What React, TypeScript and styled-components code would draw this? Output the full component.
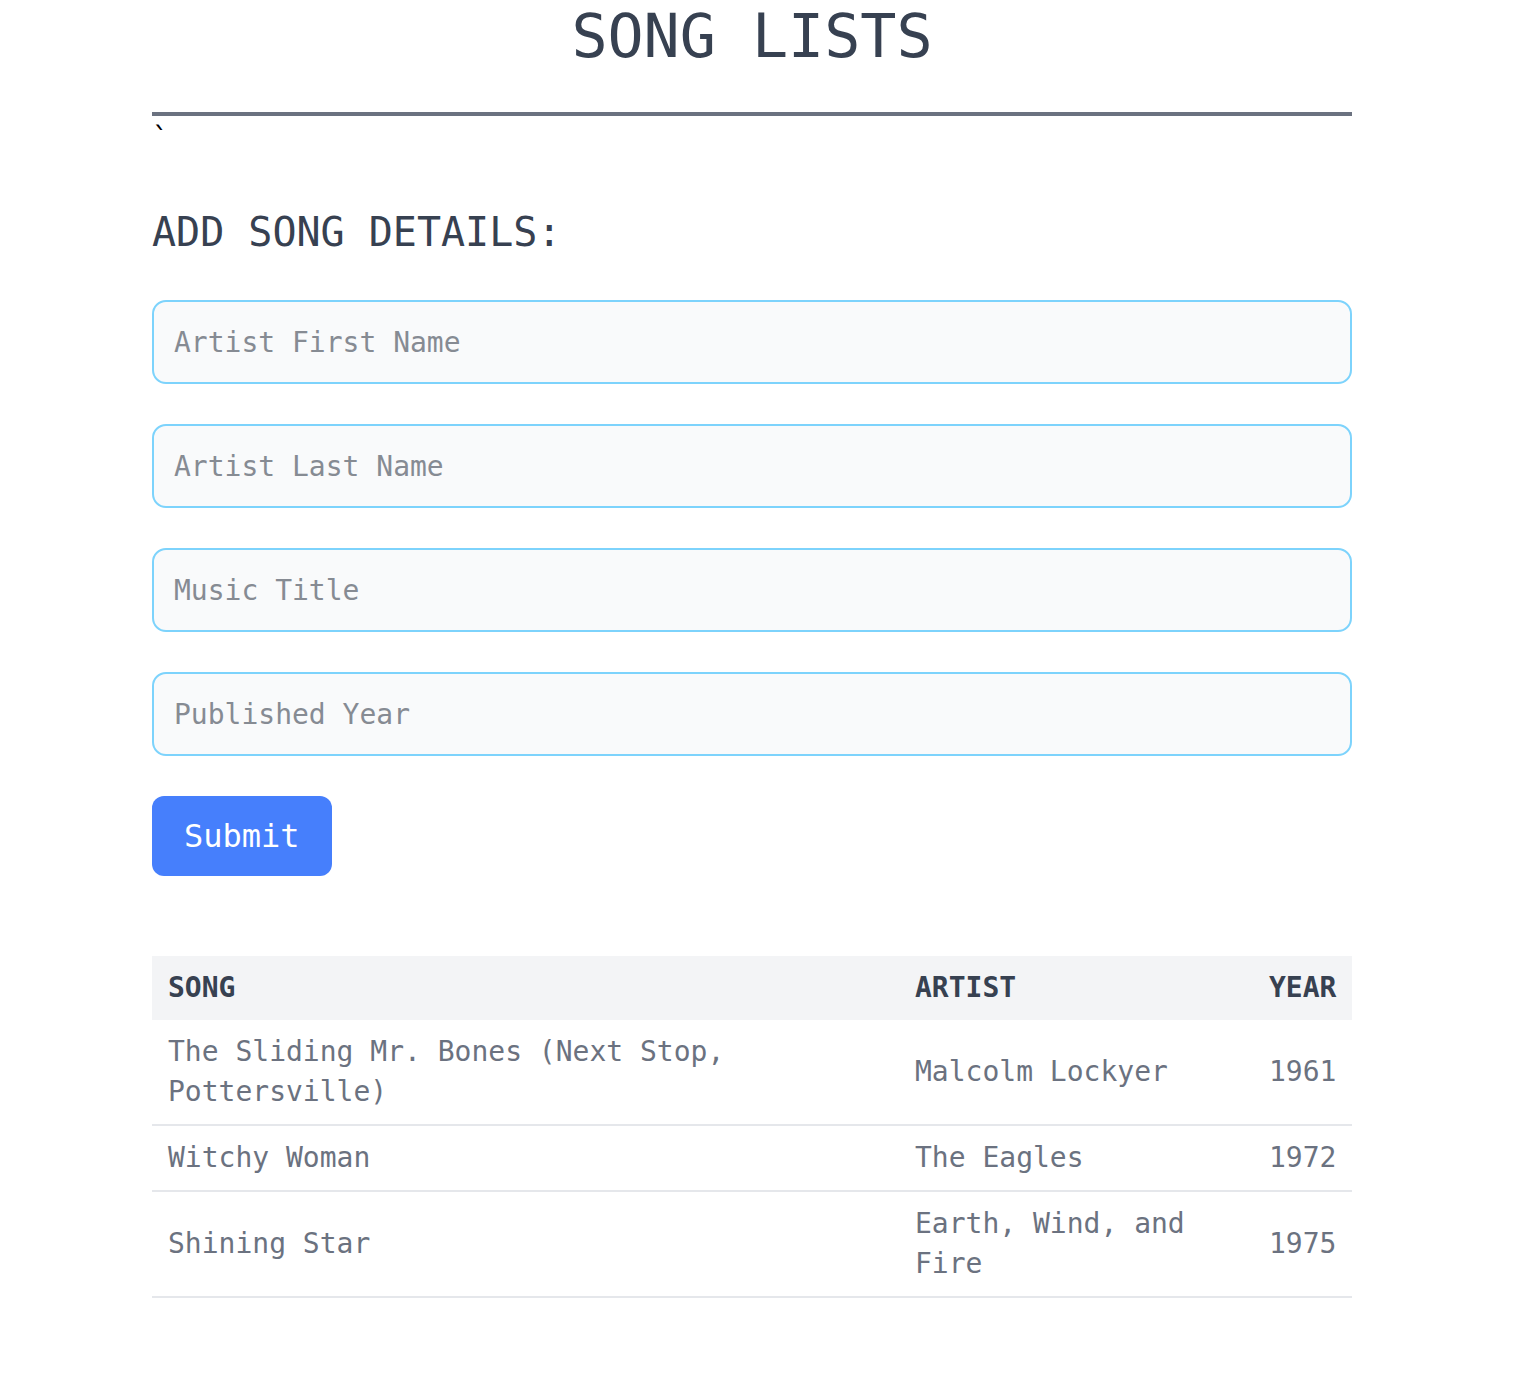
import styled, { createGlobalStyle } from 'styled-components'

interface Song {
  title: string
  artist: string
  year: number
}

const songs: Song[] = [
  { title: 'The Sliding Mr. Bones (Next Stop, Pottersville)', artist: 'Malcolm Lockyer', year: 1961 },
  { title: 'Witchy Woman', artist: 'The Eagles', year: 1972 },
  { title: 'Shining Star', artist: 'Earth, Wind, and Fire', year: 1975 },
]

const fields = ['Artist First Name', 'Artist Last Name', 'Music Title', 'Published Year']

const GlobalStyle = createGlobalStyle`
  body {
    margin: 0;
    background: #fff;
    font-family: "DejaVu Sans Mono", "Liberation Mono", monospace;
  }
`

const Page = styled.div`
  width: 1200px;
  margin-left: 152px;
  padding-bottom: 80px;
`

const Title = styled.h1`
  margin: 0;
  font-size: 60px;
  line-height: 72px;
  font-weight: 400;
  text-align: center;
  color: #374151;
`

const Divider = styled.hr`
  margin: 40px 0 0;
  height: 4px;
  border: none;
  background: #6b7280;
`

const Stray = styled.div`
  padding-top: 3px;
  font-size: 28px;
  line-height: 40px;
  color: #000;
`

const SectionTitle = styled.h2`
  margin: 49px 0 0;
  font-size: 40px;
  line-height: 48px;
  font-weight: 400;
  color: #374151;
`

const Form = styled.form`
  display: flex;
  flex-direction: column;
  align-items: flex-start;
  gap: 40px;
  margin-top: 44px;
`

const Input = styled.input`
  box-sizing: border-box;
  width: 100%;
  height: 84px;
  padding: 0 20px;
  border: 2px solid #7dd3fc;
  border-radius: 14px;
  background: #f9fafb;
  font-family: inherit;
  font-size: 28px;
  color: #374151;
  outline: none;

  &::placeholder {
    color: #868b93;
  }
`

const SubmitButton = styled.button`
  box-sizing: border-box;
  height: 80px;
  padding: 0 32px;
  border: none;
  border-radius: 12px;
  background: #467ffc;
  color: #fff;
  font-family: inherit;
  font-size: 32px;
  cursor: pointer;
`

const Table = styled.table`
  width: 100%;
  margin-top: 80px;
  border-collapse: collapse;
  table-layout: fixed;
  font-size: 28px;
  line-height: 40px;
`

const HeadRow = styled.tr`
  background: #f3f4f6;
`

const Th = styled.th<{ $right?: boolean }>`
  padding: 12px 16px;
  text-align: ${(p) => (p.$right ? 'right' : 'left')};
  font-weight: 700;
  color: #374151;
`

const Row = styled.tr`
  border-bottom: 2px solid #e5e7eb;
`

const Td = styled.td<{ $right?: boolean }>`
  padding: 12px 16px;
  text-align: ${(p) => (p.$right ? 'right' : 'left')};
  vertical-align: middle;
  color: #6b7280;
`

export default function App() {
  return (
    <>
      <GlobalStyle />
      <Page>
        <Title>SONG LISTS</Title>
        <Divider />
        <Stray>`</Stray>
        <SectionTitle>ADD SONG DETAILS:</SectionTitle>
        <Form onSubmit={(e) => e.preventDefault()}>
          {fields.map((f) => (
            <Input key={f} placeholder={f} />
          ))}
          <SubmitButton type="submit">Submit</SubmitButton>
        </Form>
        <Table>
          <colgroup>
            <col style={{ width: 747 }} />
            <col style={{ width: 354 }} />
            <col />
          </colgroup>
          <thead>
            <HeadRow>
              <Th>SONG</Th>
              <Th>ARTIST</Th>
              <Th $right>YEAR</Th>
            </HeadRow>
          </thead>
          <tbody>
            {songs.map((s) => (
              <Row key={s.title}>
                <Td>{s.title}</Td>
                <Td>{s.artist}</Td>
                <Td $right>{s.year}</Td>
              </Row>
            ))}
          </tbody>
        </Table>
      </Page>
    </>
  )
}
